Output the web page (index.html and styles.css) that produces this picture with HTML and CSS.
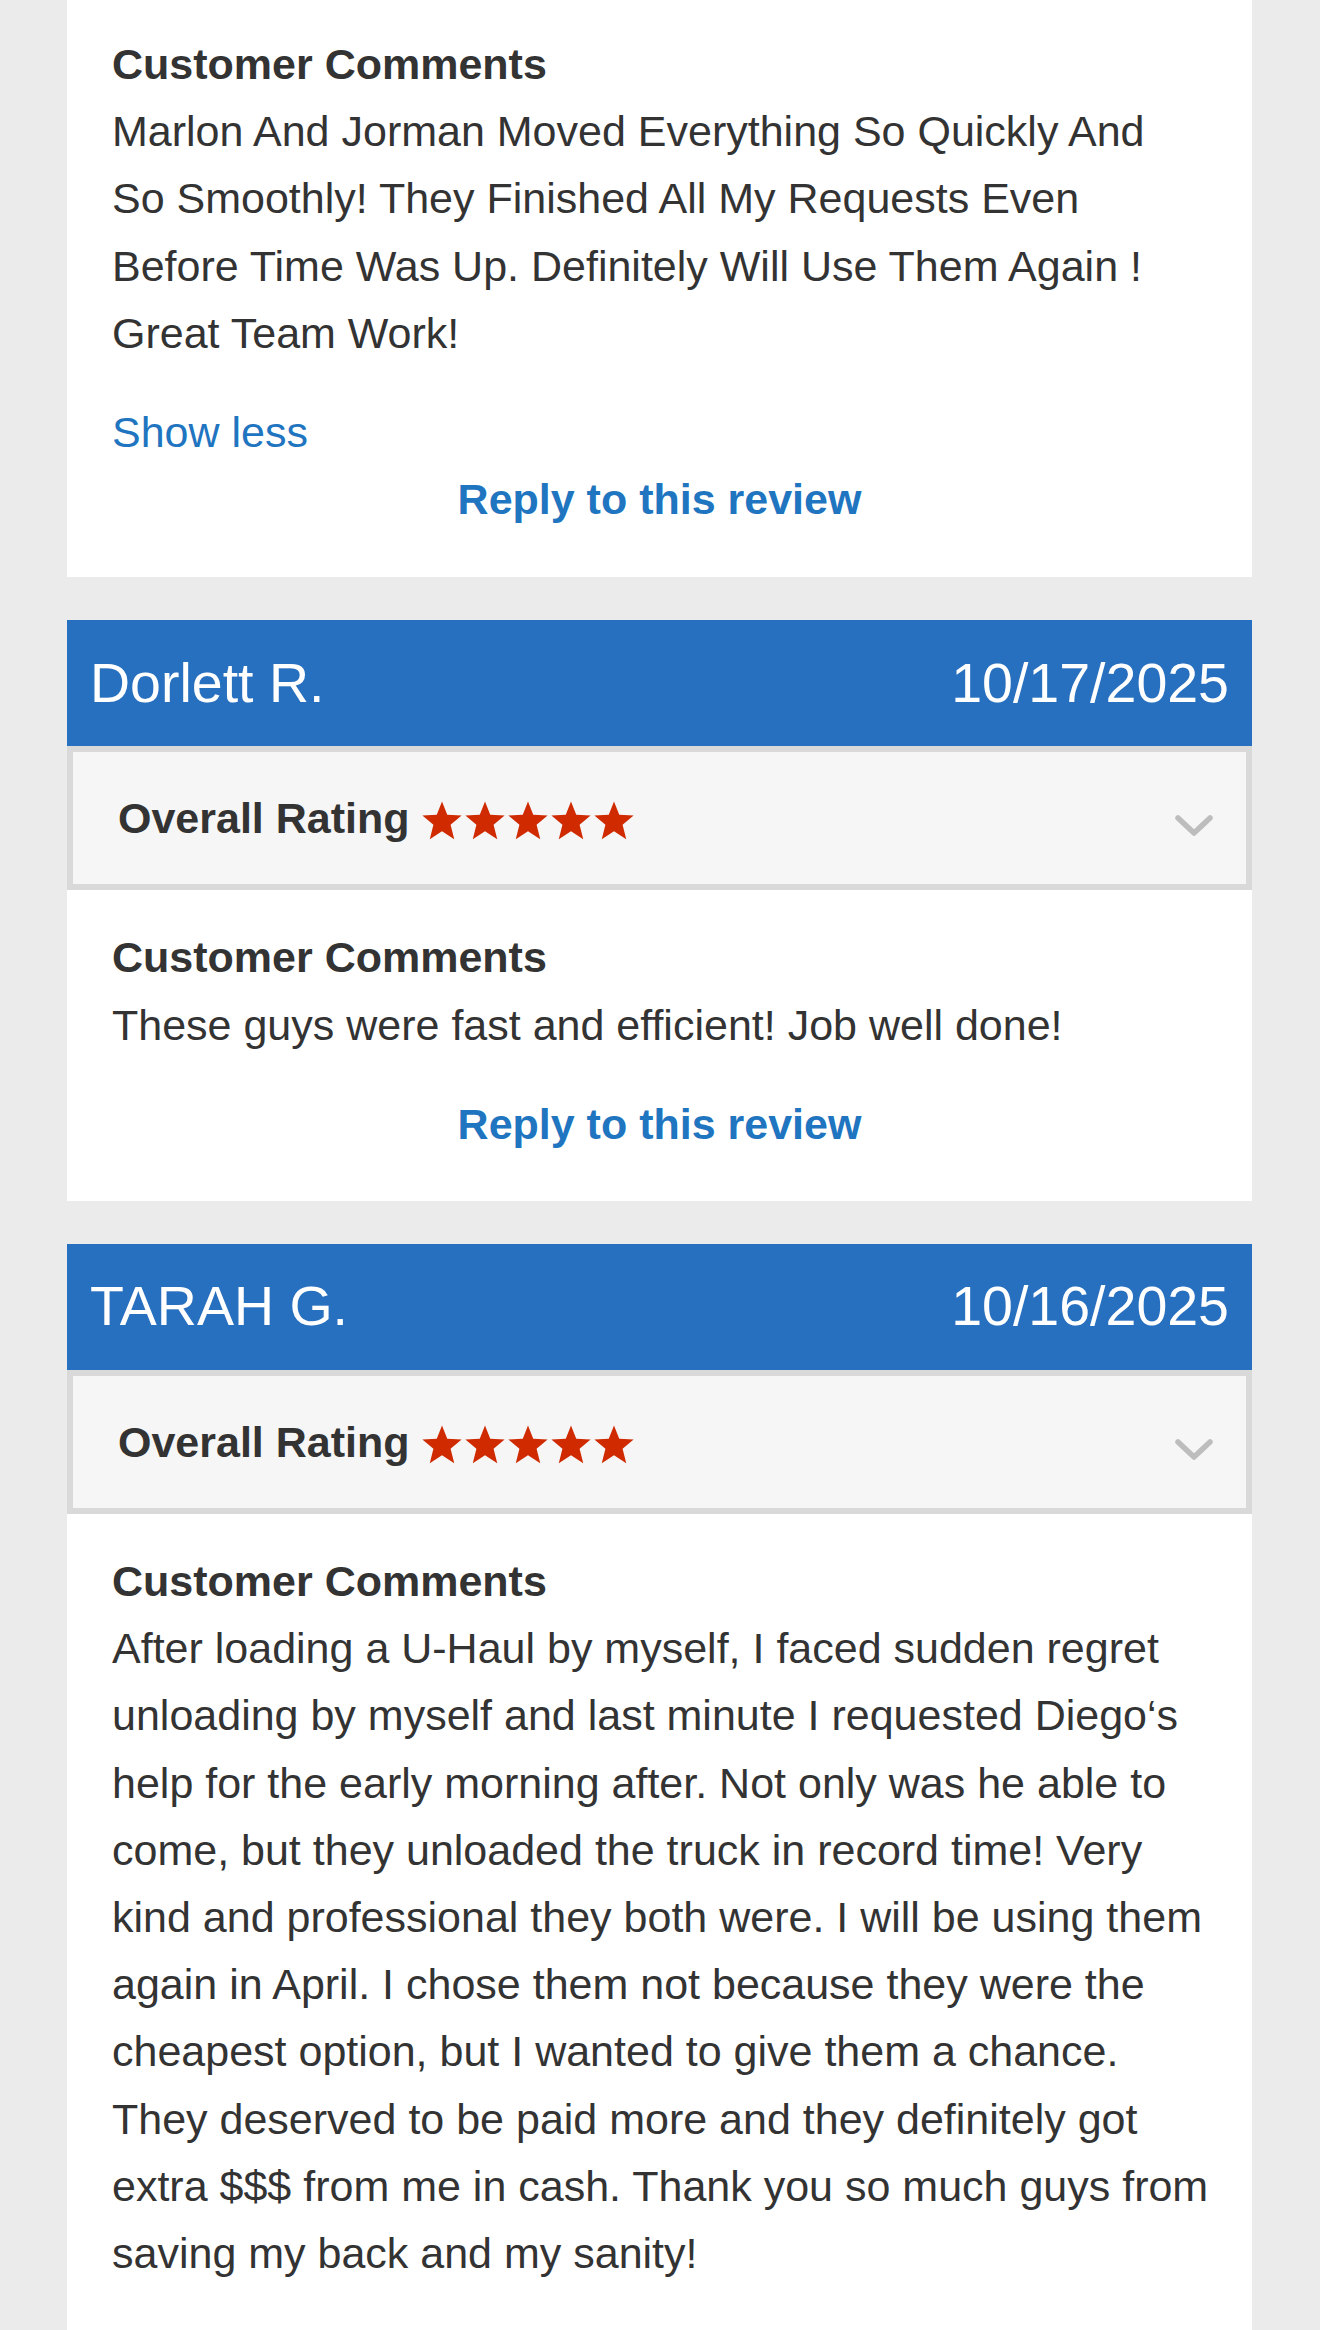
FILE: index.html
```html
<!DOCTYPE html>
<html lang="en">
<head>
<meta charset="utf-8">
<title>Reviews</title>
<link rel="stylesheet" href="styles.css">
</head>
<body>
<div class="reviews">

  <section class="card card-partial">
    <div class="comments">
      <h3 class="comments-title">Customer Comments</h3>
      <p class="comments-text">Marlon And Jorman Moved Everything So Quickly And<br>So Smoothly! They Finished All My Requests Even<br>Before Time Was Up. Definitely Will Use Them Again !<br>Great Team Work!</p>
      <a class="show-less" href="#">Show less</a>
      <div class="reply"><a href="#">Reply to this review</a></div>
    </div>
  </section>

  <section class="card">
    <header class="card-head">
      <span class="reviewer">Dorlett R.</span>
      <span class="date">10/17/2025</span>
    </header>
    <div class="rating">
      <span class="rating-label">Overall Rating</span>
      <span class="stars">
        <svg class="star" viewBox="0 0 24 24"><polygon points="12,0.8 15,8.4 23.2,8.9 16.9,14.2 19,22.4 12,17.9 5,22.4 7.1,14.2 0.8,8.9 9,8.4"/></svg>
        <svg class="star" viewBox="0 0 24 24"><polygon points="12,0.8 15,8.4 23.2,8.9 16.9,14.2 19,22.4 12,17.9 5,22.4 7.1,14.2 0.8,8.9 9,8.4"/></svg>
        <svg class="star" viewBox="0 0 24 24"><polygon points="12,0.8 15,8.4 23.2,8.9 16.9,14.2 19,22.4 12,17.9 5,22.4 7.1,14.2 0.8,8.9 9,8.4"/></svg>
        <svg class="star" viewBox="0 0 24 24"><polygon points="12,0.8 15,8.4 23.2,8.9 16.9,14.2 19,22.4 12,17.9 5,22.4 7.1,14.2 0.8,8.9 9,8.4"/></svg>
        <svg class="star" viewBox="0 0 24 24"><polygon points="12,0.8 15,8.4 23.2,8.9 16.9,14.2 19,22.4 12,17.9 5,22.4 7.1,14.2 0.8,8.9 9,8.4"/></svg>
      </span>
      <svg class="chevron" viewBox="0 0 40 24"><polyline points="4,4 20,19 36,4"/></svg>
    </div>
    <div class="comments">
      <h3 class="comments-title">Customer Comments</h3>
      <p class="comments-text">These guys were fast and efficient! Job well done!</p>
      <div class="reply"><a href="#">Reply to this review</a></div>
    </div>
  </section>

  <section class="card">
    <header class="card-head">
      <span class="reviewer">TARAH G.</span>
      <span class="date">10/16/2025</span>
    </header>
    <div class="rating">
      <span class="rating-label">Overall Rating</span>
      <span class="stars">
        <svg class="star" viewBox="0 0 24 24"><polygon points="12,0.8 15,8.4 23.2,8.9 16.9,14.2 19,22.4 12,17.9 5,22.4 7.1,14.2 0.8,8.9 9,8.4"/></svg>
        <svg class="star" viewBox="0 0 24 24"><polygon points="12,0.8 15,8.4 23.2,8.9 16.9,14.2 19,22.4 12,17.9 5,22.4 7.1,14.2 0.8,8.9 9,8.4"/></svg>
        <svg class="star" viewBox="0 0 24 24"><polygon points="12,0.8 15,8.4 23.2,8.9 16.9,14.2 19,22.4 12,17.9 5,22.4 7.1,14.2 0.8,8.9 9,8.4"/></svg>
        <svg class="star" viewBox="0 0 24 24"><polygon points="12,0.8 15,8.4 23.2,8.9 16.9,14.2 19,22.4 12,17.9 5,22.4 7.1,14.2 0.8,8.9 9,8.4"/></svg>
        <svg class="star" viewBox="0 0 24 24"><polygon points="12,0.8 15,8.4 23.2,8.9 16.9,14.2 19,22.4 12,17.9 5,22.4 7.1,14.2 0.8,8.9 9,8.4"/></svg>
      </span>
      <svg class="chevron" viewBox="0 0 40 24"><polyline points="4,4 20,19 36,4"/></svg>
    </div>
    <div class="comments comments-long">
      <h3 class="comments-title">Customer Comments</h3>
      <p class="comments-text">After loading a U-Haul by myself, I faced sudden regret<br>unloading by myself and last minute I requested Diego‘s<br>help for the early morning after. Not only was he able to<br>come, but they unloaded the truck in record time! Very<br>kind and professional they both were. I will be using them<br>again in April. I chose them not because they were the<br>cheapest option, but I wanted to give them a chance.<br>They deserved to be paid more and they definitely got<br>extra $$$ from me in cash. Thank you so much guys from<br>saving my back and my sanity!</p>
    </div>
  </section>

</div>
</body>
</html>
```

FILE: styles.css
```css
html, body {
  margin: 0;
  padding: 0;
}

body {
  background: #ebebeb;
  font-family: "Liberation Sans", Arial, Helvetica, sans-serif;
  color: #333333;
  height: 2330px;
  overflow: hidden;
}

.reviews {
  width: 1185px;
  margin: 0 0 0 67px;
  display: flex;
  flex-direction: column;
  gap: 43px;
}

.card {
  background: #ffffff;
}

.card-head {
  height: 126px;
  background: #276fbf;
  color: #ffffff;
  display: flex;
  align-items: center;
  justify-content: space-between;
  padding: 0 23px 0 23px;
  font-size: 55.5px;
  line-height: 1;
}

.rating {
  height: 132px;
  border: 6px solid #d9d9d9;
  background: #f6f6f6;
  display: flex;
  align-items: center;
  padding: 0 32px 0 45px;
}

.rating-label {
  font-size: 43px;
  font-weight: bold;
  color: #333333;
  line-height: 1;
}

.stars {
  display: flex;
  gap: 1px;
  margin-left: 11px;
  margin-top: 6px;
}

.star {
  width: 42px;
  height: 42px;
  fill: #cf2a00;
}

.chevron {
  width: 40px;
  height: 24px;
  margin-left: auto;
  margin-top: 15px;
  fill: none;
  stroke: #bdbdbd;
  stroke-width: 5.5;
  stroke-linecap: round;
  stroke-linejoin: round;
}

.comments {
  padding: 34px 45px 43px 45px;
  font-size: 43px;
  line-height: 67.2px;
}

.card-partial .comments {
  padding-top: 31px;
  padding-bottom: 44px;
}

.comments-long {
  padding-bottom: 200px;
}

.comments-title {
  margin: 0;
  font-size: 43px;
  font-weight: bold;
  line-height: 67.2px;
  color: #333333;
}

.comments-text {
  margin: 0 0 32px 0;
  color: #333333;
  white-space: nowrap;
}

.comments-long .comments-text {
  margin-bottom: 0;
}

.show-less {
  display: block;
  color: #1f75c0;
  text-decoration: none;
}

.reply {
  text-align: center;
  font-weight: bold;
}

.reply a {
  color: #1f75c0;
  text-decoration: none;
}
```
